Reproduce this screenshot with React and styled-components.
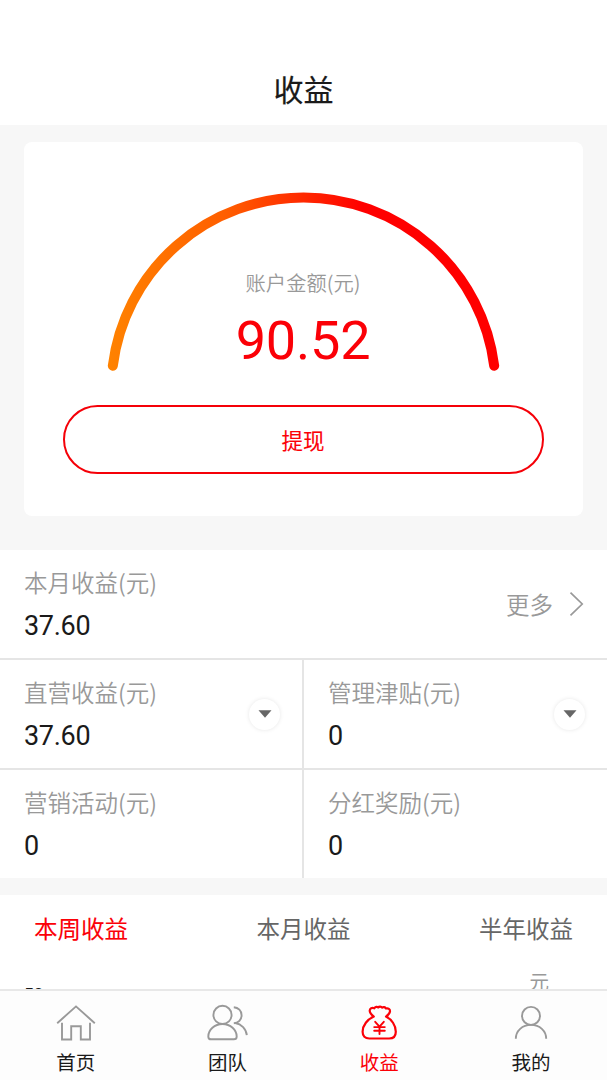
import React, { useState } from "react";
import styled, { createGlobalStyle } from "styled-components";

const GlobalStyle = createGlobalStyle`
  * {
    box-sizing: border-box;
  }
  body {
    margin: 0;
    background: #fff;
    font-family: "Noto Sans CJK SC", sans-serif;
  }
  button {
    margin: 0;
    padding: 0;
    border: none;
    background: none;
    font-family: inherit;
  }
`;

const HomeIcon = () => (
    <svg width="44" height="42" viewBox="0 0 44 42" fill="none" stroke="#999" strokeWidth="1.9">
        <path d="M3.2 21.2 22 4.4l18.8 16.8" />
        <path d="M8 20.8v16.7h9.2V24.3h9.6v13.2H36V20.8" />
    </svg>
);

const TeamIcon = () => (
    <svg width="44" height="42" viewBox="0 0 44 42" fill="none" stroke="#999" strokeWidth="1.9">
        <circle cx="16.5" cy="12.9" r="9.1" />
        <path d="M16.5 22C8.4 22 2.4 28 2.3 34.4c0 2 .9 2.9 2.9 2.9h22.6c2 0 2.9-.9 2.9-2.9-.1-6.4-6.1-12.4-14.2-12.4Z" />
        <path d="M27.8 5.2c4.5.4 7.8 3.6 7.8 8s-3.3 7.8-7.8 8.1" />
        <path d="M29.2 21c6.2 1.1 11 5.8 11.6 12.2" />
    </svg>
);

const MoneyIcon = () => (
    <svg width="44" height="42" viewBox="0 0 44 42" fill="none" stroke="#fb0007" strokeWidth="2.2" strokeLinejoin="round" strokeLinecap="round">
        <path d="M16.8 14.6c-2-1.6-4.1-3.5-4.1-5.8 0-2.3 2.3-3.5 4.6-2.5.9-1.8 2.9-1.9 3.9-.8.9-1.2 3-1.2 4 .2 1-.9 2.8-.8 3.7.8 2.3-.7 4.3.6 4.1 2.8-.2 2.1-2.1 3.9-4 5.3 5.6 2.7 9.8 8.7 9.8 15.1 0 4.2-2.5 6.8-6.7 6.8H12.3c-4.2 0-6.7-2.6-6.7-6.8 0-6.4 4.9-12.4 11.2-15.1Z" />
        <path d="M18.2 19.8l4.3 4.9 4.3-4.9M22.5 24.7v7.3M17.2 25.1h10.6M17.2 28.7h10.6" strokeWidth="1.9" />
    </svg>
);

const MineIcon = () => (
    <svg width="44" height="42" viewBox="0 0 44 42" fill="none" stroke="#999" strokeWidth="1.9">
        <circle cx="22" cy="13.9" r="9" />
        <path d="M6.8 36.8c0-8 6.5-13.9 15.2-13.9s15.2 5.9 15.2 13.9" />
    </svg>
);

const stats = [
    { label: "直营收益(元)", value: "37.60", more: true },
    { label: "管理津贴(元)", value: "0", more: true },
    { label: "营销活动(元)", value: "0" },
    { label: "分红奖励(元)", value: "0" },
];

const periods = ["本周收益", "本月收益", "半年收益"];

const menus = [
    { name: "首页", icon: <HomeIcon /> },
    { name: "团队", icon: <TeamIcon /> },
    { name: "收益", icon: <MoneyIcon /> },
    { name: "我的", icon: <MineIcon /> },
];

const App = () => {
    const [period, setPeriod] = useState(0);
    const [menu, setMenu] = useState(2);

    return (
        <Page>
            <GlobalStyle />
            <Header>收益</Header>
            <Content>
                <AccountArea>
                    <Card>
                        <Gauge>
                            <GaugeArc viewBox="0 0 400 190">
                                <defs>
                                    <linearGradient id="arc" gradientUnits="userSpaceOnUse" x1="5" y1="0" x2="395" y2="0">
                                        <stop offset="0" stopColor="#ff8200" />
                                        <stop offset="0.3" stopColor="#ff5e00" />
                                        <stop offset="0.65" stopColor="#ff0000" />
                                        <stop offset="1" stopColor="#ff0000" />
                                    </linearGradient>
                                </defs>
                                <path
                                    d="M8.8 175.8A192.2 192.2 0 0 1 390.2 175.8"
                                    fill="none"
                                    stroke="url(#arc)"
                                    strokeWidth="10"
                                    strokeLinecap="round"
                                />
                            </GaugeArc>
                            <AccountLabel>账户金额(元)</AccountLabel>
                            <AccountValue>90.52</AccountValue>
                        </Gauge>
                        <WithdrawButton>提现</WithdrawButton>
                    </Card>
                </AccountArea>
                <MonthRow>
                    <div>
                        <Label>本月收益(元)</Label>
                        <Value>37.60</Value>
                    </div>
                    <More>
                        更多
                        <svg width="15" height="26" viewBox="0 0 15 26" fill="none" stroke="#999" strokeWidth="1.7">
                            <path d="M1.5 1.7 13.2 13 1.5 24.3" />
                        </svg>
                    </More>
                </MonthRow>
                <StatGrid>
                    {stats.map((item) => (
                        <StatCell key={item.label}>
                            <div>
                                <Label>{item.label}</Label>
                                <Value>{item.value}</Value>
                            </div>
                            {item.more && (
                                <Toggle>
                                    <svg width="14" height="8" viewBox="0 0 14 8">
                                        <path d="M.5.3h13L7 7.8Z" fill="#666" />
                                    </svg>
                                </Toggle>
                            )}
                        </StatCell>
                    ))}
                </StatGrid>
                <Periods>
                    {periods.map((name, index) => (
                        <Period key={name} $active={index === period} onClick={() => setPeriod(index)}>
                            {name}
                        </Period>
                    ))}
                </Periods>
                <ChartTop>
                    <AxisMax>50</AxisMax>
                    <AxisUnit>元</AxisUnit>
                </ChartTop>
            </Content>
            <TabBar>
                {menus.map((item, index) => (
                    <TabItem key={item.name} $active={index === menu} onClick={() => setMenu(index)}>
                        {item.icon}
                        <span>{item.name}</span>
                    </TabItem>
                ))}
            </TabBar>
        </Page>
    );
};

const Page = styled.div`
  display: flex;
  flex-direction: column;
  width: 607px;
  height: 1080px;
  overflow: hidden;
  background: #fff;
`;

const Header = styled.header`
  flex: none;
  height: 125px;
  padding-top: 66px;
  text-align: center;
  font-size: 30px;
  line-height: 44px;
  -webkit-text-stroke: 0.2px;
  color: #1a1a1a;
`;

const Content = styled.main`
  flex: 1;
  min-height: 0;
  overflow: hidden;
`;

const AccountArea = styled.section`
  height: 425px;
  padding: 17px 24px 0;
  background: #f7f7f7;
`;

const Card = styled.div`
  display: flex;
  flex-direction: column;
  align-items: center;
  height: 374px;
  padding-top: 48px;
  border-radius: 8px;
  background: #fff;
`;

const Gauge = styled.div`
  position: relative;
  display: flex;
  flex-direction: column;
  align-items: center;
  width: 400px;
  height: 215px;
  padding: 77px 1px 0 0;
`;

const GaugeArc = styled.svg`
  position: absolute;
  top: 0;
  left: 0;
  width: 400px;
  height: 190px;
`;

const AccountLabel = styled.div`
  font-size: 20.3px;
  line-height: 30px;
  font-weight: 350;
  color: #999;
`;

const AccountValue = styled.div`
  margin-top: 14px;
  font-family: Roboto, sans-serif;
  font-size: 54px;
  line-height: 60px;
  letter-spacing: -0.2px;
  color: #fb0007;
`;

const WithdrawButton = styled.button`
  width: 481px;
  height: 69px;
  padding-right: 1px;
  border: 2px solid #f50008;
  border-radius: 35px;
  font-size: 21.5px;
  -webkit-text-stroke: 0.1px;
  color: #fb0007;
`;

const MonthRow = styled.section`
  display: flex;
  align-items: center;
  justify-content: space-between;
  height: 110px;
  padding: 0 23px 0 24px;
  border-bottom: 2px solid #e5e5e5;
`;

const Label = styled.div`
  font-size: 23.5px;
  line-height: 34px;
  font-weight: 350;
  color: #999;
`;

const Value = styled.div`
  margin-top: 10px;
  font-family: Roboto, sans-serif;
  font-size: 27px;
  line-height: 34px;
  letter-spacing: -0.3px;
  color: #1a1a1a;
`;

const More = styled.div`
  display: flex;
  align-items: center;
  gap: 16px;
  font-size: 23.5px;
  font-weight: 350;
  color: #999;
`;

const StatGrid = styled.section`
  display: grid;
  grid-template-columns: 304px 303px;
  grid-template-rows: 110px 108px;
  border-bottom: 17px solid #f7f7f7;
`;

const StatCell = styled.div`
  display: flex;
  align-items: center;
  justify-content: space-between;
  padding: 0 22px 0 24px;

  &:nth-child(odd) {
    border-right: 2px solid #e5e5e5;
  }
  &:nth-child(-n + 2) {
    border-bottom: 2px solid #e5e5e5;
  }
`;

const Toggle = styled.button`
  display: flex;
  align-items: center;
  justify-content: center;
  width: 31px;
  height: 31px;
  border-radius: 50%;
  background: #fff;
  box-shadow: 0 0 4px rgba(0, 0, 0, 0.1);
`;

const Periods = styled.nav`
  display: flex;
  justify-content: space-between;
  padding: 16px 34px 0;
`;

const Period = styled.button`
  font-size: 23.5px;
  line-height: 34px;
  -webkit-text-stroke: ${(props) => (props.$active ? "0.1px" : "0")};
  color: ${(props) => (props.$active ? "#fb0007" : "#666")};
`;

const ChartTop = styled.div`
  display: flex;
  justify-content: space-between;
  padding: 22px 58px 0 24px;
`;

const AxisMax = styled.div`
  margin-top: 17px;
  font-family: Roboto, sans-serif;
  font-size: 17px;
  line-height: 20px;
  font-weight: 500;
  color: #1a1a1a;
`;

const AxisUnit = styled.div`
  font-size: 19.5px;
  line-height: 28px;
  color: #999;
`;

const TabBar = styled.nav`
  flex: none;
  display: grid;
  grid-template-columns: repeat(4, 1fr);
  height: 91px;
  border-top: 2px solid #e8e8e8;
  background: #fdfdfd;
`;

const TabItem = styled.button`
  display: flex;
  flex-direction: column;
  align-items: center;
  padding-top: 11px;
  font-size: 19.5px;
  line-height: 28px;
  color: ${(props) => (props.$active ? "#fb0007" : "#1a1a1a")};

  span {
    margin-top: 4px;
  }
`;

export default App;
